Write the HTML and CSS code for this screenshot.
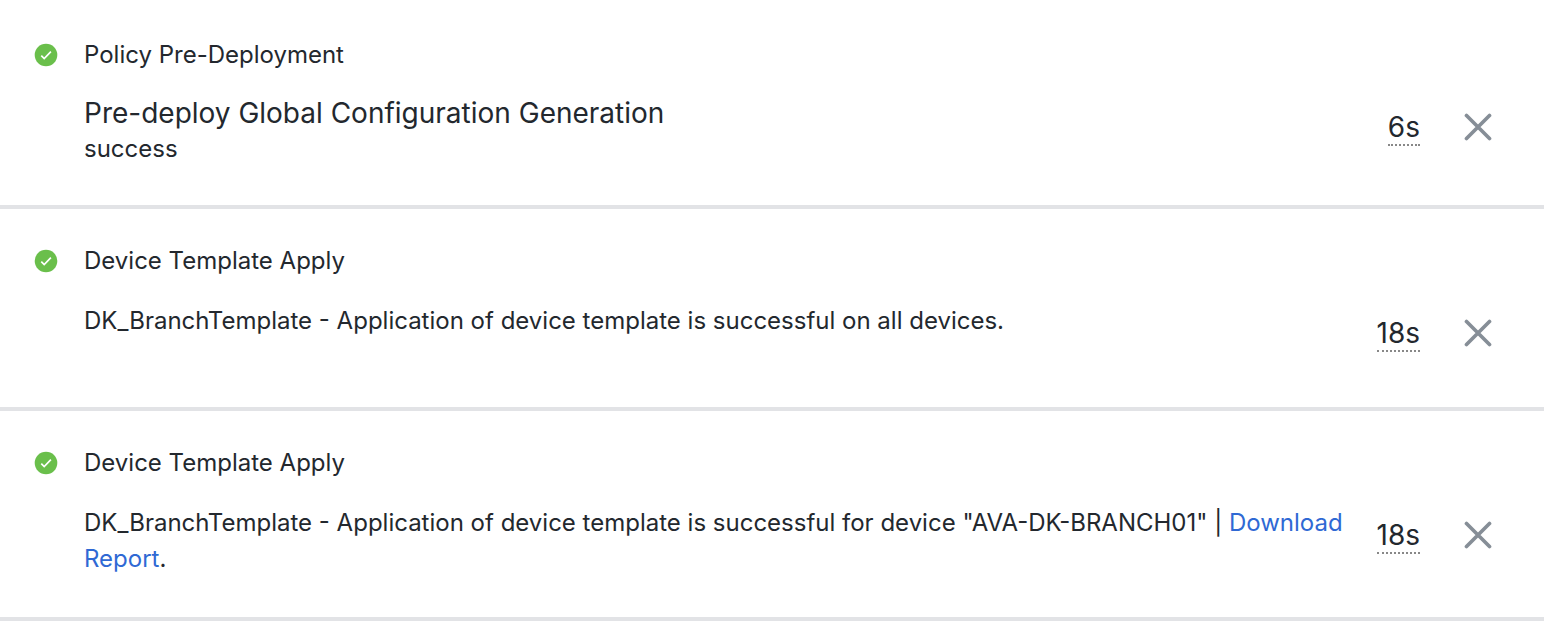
FILE: index.html
```html
<!DOCTYPE html>
<html lang="en">
<head>
<meta charset="utf-8">
<title>Deployment tasks</title>
<link rel="stylesheet" href="styles.css">
</head>
<body>
<main class="tasks">
  <article class="task">
    <svg class="status" viewBox="0 0 24 24" role="img" aria-label="Success"><circle cx="12" cy="12" r="11.3"/><path d="M7.3 12.6l2.9 2.9 6.7-6.9"/></svg>
    <div class="content">
      <h2 class="title">Policy Pre-Deployment</h2>
      <div class="body">
        <div class="message">
          <h3 class="subject">Pre-deploy Global Configuration Generation</h3>
          <p class="text">success</p>
        </div>
        <span class="duration">6s</span>
        <button class="close" type="button" aria-label="Dismiss"><svg viewBox="0 0 28 28"><path d="M2.5 2.5l23 23M25.5 2.5l-23 23"/></svg></button>
      </div>
    </div>
  </article>
  <article class="task">
    <svg class="status" viewBox="0 0 24 24" role="img" aria-label="Success"><circle cx="12" cy="12" r="11.3"/><path d="M7.3 12.6l2.9 2.9 6.7-6.9"/></svg>
    <div class="content">
      <h2 class="title">Device Template Apply</h2>
      <div class="body">
        <div class="message">
          <p class="text text-only">DK_BranchTemplate - Application of device template is successful on all devices.</p>
        </div>
        <span class="duration">18s</span>
        <button class="close" type="button" aria-label="Dismiss"><svg viewBox="0 0 28 28"><path d="M2.5 2.5l23 23M25.5 2.5l-23 23"/></svg></button>
      </div>
    </div>
  </article>
  <article class="task">
    <svg class="status" viewBox="0 0 24 24" role="img" aria-label="Success"><circle cx="12" cy="12" r="11.3"/><path d="M7.3 12.6l2.9 2.9 6.7-6.9"/></svg>
    <div class="content">
      <h2 class="title">Device Template Apply</h2>
      <div class="body">
        <div class="message">
          <p class="text text-only">DK_BranchTemplate - Application of device template is successful for device "AVA-DK-BRANCH01" | <a class="link" href="#report">Download Report</a>.</p>
        </div>
        <span class="duration">18s</span>
        <button class="close" type="button" aria-label="Dismiss"><svg viewBox="0 0 28 28"><path d="M2.5 2.5l23 23M25.5 2.5l-23 23"/></svg></button>
      </div>
    </div>
  </article>
</main>
</body>
</html>
```
FILE: styles.css
```css
* { box-sizing: border-box; }
body {
  margin: 0;
  background: #fff;
  color: #23282e;
  font-family: Inter, "Liberation Sans", sans-serif;
  font-size: 24px;
  font-weight: 400;
  line-height: 36px;
}
h2, h3, p { margin: 0; font-weight: inherit; }
.tasks { padding-top: 3px; }
.task {
  display: flex;
  gap: 26px;
  padding: 34px 50px 38px 34px;
  border-bottom: 4px solid #e2e3e6;
}
.status { flex: none; width: 24px; height: 24px; margin-top: 6px; }
.status circle { fill: #6abf4b; }
.status path { fill: none; stroke: #fff; stroke-width: 1.7; }
.content { flex: 1; min-width: 0; }
.title { font-size: 24px; }
.body { display: flex; align-items: flex-start; margin-top: 22px; min-height: 68px; }
.message { flex: 1; min-width: 0; padding-right: 32px; }
.subject { font-size: 28px; line-height: 36px; }
.text-only { padding: 2px 0; }
.link { color: #2f69d4; text-decoration: none; }
.duration {
  margin-top: 15px;
  font-size: 28px;
  line-height: 34px;
  border-bottom: 2px dotted #888;
}
.close {
  flex: none;
  width: 28px;
  height: 28px;
  margin: 18px 2px 0 44px;
  padding: 0;
  border: 0;
  background: none;
  cursor: pointer;
}
.close svg { display: block; width: 28px; height: 28px; }
.close path { fill: none; stroke: #868e97; stroke-width: 3.7; stroke-linecap: round; }
```
